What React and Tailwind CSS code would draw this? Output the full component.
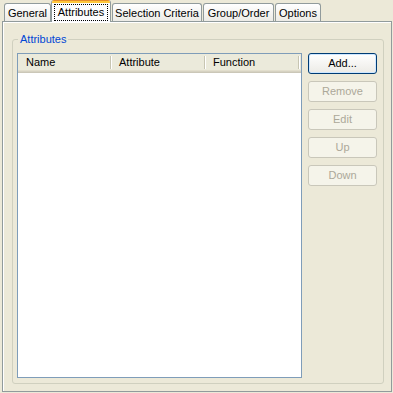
import React from 'react';

const tabs = [
  { label: 'General', cls: 'ml-[4px] w-[47px]' },
  { label: 'Attributes', cls: 'w-[60px]', active: true },
  { label: 'Selection Criteria', cls: 'ml-[1px] w-[90px]' },
  { label: 'Group/Order', cls: 'ml-[1px] w-[71px]' },
  { label: 'Options', cls: 'ml-[1px] w-[46px]' },
];

const columns = ['Name', 'Attribute', 'Function'];

const buttons = [
  { label: 'Add...', primary: true },
  { label: 'Remove' },
  { label: 'Edit' },
  { label: 'Up' },
  { label: 'Down' },
];

const Tab = ({ tab }) => {
  if (tab.active) {
    return (
      <div className={`${tab.cls} relative z-10 h-[22px] flex flex-col rounded-t-[3px] border-x border-[#919B9C] bg-[#FCFCFE] overflow-hidden`}>
        <div className="h-[1px] bg-[#E68B2C]" />
        <div className="h-[2px] bg-[#FFC73C]" />
        <div className="flex-1 flex items-start justify-center pt-[2px]">
          <span className="px-[3px] py-[1px] leading-[13px] outline outline-1 outline-dotted outline-black">{tab.label}</span>
        </div>
      </div>
    );
  }
  return (
    <div className={`${tab.cls} mt-[3px] h-[18px] flex items-center justify-center pt-[1px] rounded-t-[3px] border border-b-0 border-[#919B9C] bg-gradient-to-b from-white to-[#ECEBE6]`}>
      {tab.label}
    </div>
  );
};

export default function App() {
  return (
    <div className="w-[393px] h-[393px] bg-[#ECE9D8] font-['Liberation_Sans',Arial,sans-serif] text-[11px] text-black overflow-hidden">
      {/* Tab strip */}
      <div className="h-[21px] flex items-start">
        {tabs.map((t) => (
          <Tab key={t.label} tab={t} />
        ))}
      </div>

      {/* Tab page */}
      <div className="ml-[2px] w-[390px] h-[371px] border border-[#919B9C] shadow-[inset_1px_1px_0_#fff] flex">
        <fieldset className="mt-[11px] ml-[9px] mr-[7px] mb-[7px] flex-1 min-w-0 border border-[#D0D0BF] rounded-[3px] pl-[4px] pr-[6px] pb-[5px] pt-[7px]">
          <legend className="ml-[1px] px-[2px] leading-[13px] text-[#0046D5]">Attributes</legend>
          <div className="flex gap-[6px] h-full">
            {/* List */}
            <div className="w-[285px] h-[325px] border border-[#7F9DB9] bg-white">
              <div className="h-[19px] flex bg-[#EBEADB] shadow-[inset_0_-1px_0_#CBC7B8,inset_0_-2px_0_#D6D2C2,inset_0_-3px_0_#E2DECD]">
                {columns.map((c, i) => (
                  <div key={c} className={`w-[94px] flex items-center pb-[2px] ${i === 0 ? 'pl-[8px]' : 'pl-[7px]'}`}>
                    <span className="flex-1">{c}</span>
                    <div className="h-[13px] w-[2px] border-l border-[#C7C5B2] border-r border-r-white mb-[1px]" />
                  </div>
                ))}
              </div>
            </div>

            {/* Buttons */}
            <div className="flex flex-col gap-[7px]">
              {buttons.map((b) =>
                b.primary ? (
                  <button
                    key={b.label}
                    className="w-[69px] h-[21px] rounded-[3px] border border-[#003C74] bg-gradient-to-b from-white to-[#ECEBE6] shadow-[inset_0_0_0_1px_#CEE7FF] text-black"
                  >
                    {b.label}
                  </button>
                ) : (
                  <button
                    key={b.label}
                    className="w-[69px] h-[21px] rounded-[3px] border border-[#C9C7BA] bg-[#F5F4EA] text-[#ACA899]"
                  >
                    {b.label}
                  </button>
                )
              )}
            </div>
          </div>
        </fieldset>
      </div>
    </div>
  );
}
